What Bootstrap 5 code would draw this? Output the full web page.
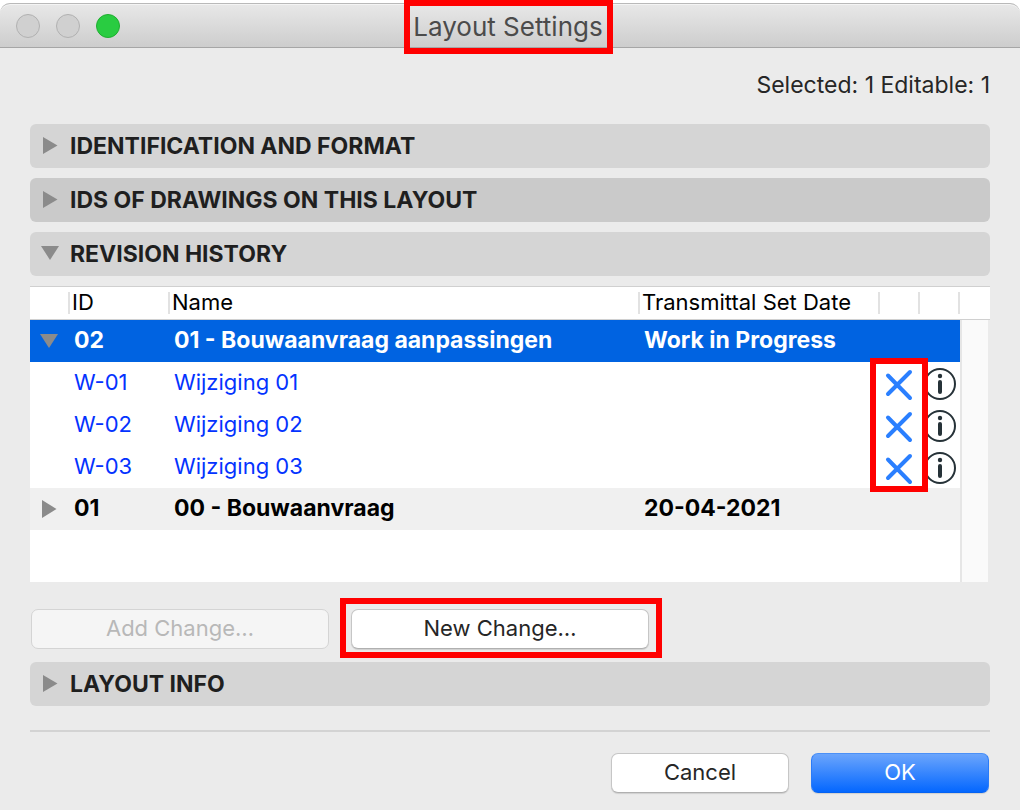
<!DOCTYPE html>
<html lang="en">
<head>
<meta charset="utf-8">
<meta name="viewport" content="width=device-width, initial-scale=1">
<title>Layout Settings</title>
<link rel="stylesheet" href="https://cdn.jsdelivr.net/npm/bootstrap@5.3.0/dist/css/bootstrap.min.css">
<style>
  body { font-family: Inter, "Liberation Sans", sans-serif; font-size: 22px; line-height: 28px; color: #262626; background: #fff; }
  .dialog-window { min-height: calc(100vh - 3px); margin-top: 3px; background: #ebebeb; border-radius: 10px 10px 0 0; }
  .title-bar { height: 45px; padding-left: 16px; border-top: 1px solid #b9b9b9; border-bottom: 1px solid #a6a6a6; border-radius: 10px 10px 0 0; background: linear-gradient(#e8e8e8, #cdcdcd); box-shadow: inset 0 1px #f4f4f4; }
  .light { width: 24px; height: 24px; border: 1px solid #b1b1b1; border-radius: 50%; background: #d0d0d0; }
  .light-zoom { background: #29cc41; border-color: #1fae30; }
  .title-wrap { padding-top: 2px; }
  .title-text { font-size: 26px; line-height: 32px; color: #4b4b4b; }
  .callout-box { position: absolute; border: 6px solid #f00; pointer-events: none; }
  .title-callout { inset: -11px -10px -11px -9px; }
  .dialog-body { padding: 23px 30px 16px; }
  .selection-info { font-size: 23px; margin: 0 0 25px; }
  .sections { row-gap: 10px; }
  .section-bar { height: 44px; padding: 0 11px; gap: 11px; border: 0; border-radius: 6px; background: #d5d5d5; color: #1f1f1f; font-size: 23px; font-weight: 700; text-align: left; }
  .section-bar.hovered { background: #cacaca; }
  .last-bar { margin-top: 13px; }
  .tri { width: 18px; height: 18px; fill: #8b8b8b; display: block; flex: none; }
  .revisions { table-layout: fixed; width: 100%; border-collapse: separate; border-spacing: 0; background: #fff; color: #000; }
  .revisions th, .revisions td { padding: 0 4px 2px; white-space: nowrap; }
  .revisions thead th { height: 34px; padding: 0 2px 2px; font-weight: 400; border-top: 1px solid #d0d0d0; border-bottom: 1px solid #d0d0d0; background: linear-gradient(#e2e2e2, #e2e2e2) no-repeat right center / 2px 22px; }
  .revisions thead th:last-child { background: none; }
  .revisions tbody tr { height: 42px; }
  .revisions .set-row { font-size: 23px; font-weight: 700; background: #f0f0f0; }
  .revisions .picked { background: #0063e1; color: #fff; }
  .revisions .change-row { color: #0433ff; }
  .revisions .tail-row { height: 52px; }
  .revisions .tri-cell { padding: 0 10px; }
  .revisions .icon-cell { padding: 0; }
  .revisions .track { background: #fafafa; border-left: 2px solid #e6e6e6; border-right: 2px solid #ebebeb; }
  .col-arrow, .col-icon { width: 40px; }
  .col-id { width: 100px; }
  .col-date { width: 240px; }
  .col-track { width: 30px; }
  .delete-callout { top: 72px; right: 62px; width: 58px; height: 134px; }
  .icon-btn { display: block; padding: 0; border: 0; background: none; }
  .icon-btn svg { display: block; }
  .buttons-row { gap: 22px; padding: 27px 1px 0; }
  .action-row { gap: 22px; padding: 21px 1px 0; }
  .mac-btn { height: 40px; padding: 0 0 2px; border: 1px solid #c6c6c6; border-bottom-color: #b0b0b0; border-radius: 7px; background: #fff; color: #262626; font-size: 22px; line-height: 28px; box-shadow: 0 1px 1px rgba(0,0,0,.12); }
  .mac-btn:disabled { background: #f5f5f5; color: #b8b8b8; border-color: #d4d4d4; opacity: 1; box-shadow: none; }
  .mac-btn.primary { background: linear-gradient(#6ba5fc, #0467ff); color: #fff; border-color: #4b90f7 #2a7bf8 #0562f2; }
  .wide { width: 298px; }
  .medium { width: 178px; }
  .new-callout { inset: -11px -13px -9px -11px; }
  .rule { height: 2px; background: #d3d3d3; }
</style>
</head>
<body>
<div class="dialog-window">
  <header class="title-bar position-relative d-flex align-items-center">
    <div class="d-flex gap-3">
      <span class="light"></span><span class="light"></span><span class="light light-zoom"></span>
    </div>
    <div class="title-wrap position-absolute start-0 end-0 d-flex justify-content-center pe-1">
      <h1 class="title-text position-relative fw-normal m-0">Layout Settings<span class="callout-box title-callout"></span></h1>
    </div>
  </header>
  <main class="dialog-body">
    <p class="selection-info text-end">Selected: 1 Editable: 1</p>
    <div class="sections d-grid">
      <button type="button" class="section-bar d-flex align-items-center" aria-expanded="false"><svg class="tri" viewBox="0 0 18 18"><path d="M2 0 16.500 8.500 2 17z"/></svg>IDENTIFICATION AND FORMAT</button>
      <button type="button" class="section-bar hovered d-flex align-items-center" aria-expanded="false"><svg class="tri" viewBox="0 0 18 18"><path d="M2 0 16.500 8.500 2 17z"/></svg>IDS OF DRAWINGS ON THIS LAYOUT</button>
      <button type="button" class="section-bar d-flex align-items-center" aria-expanded="true"><svg class="tri" viewBox="0 0 18 18"><path d="M0 1H18L9 15z"/></svg>REVISION HISTORY</button>
      <div class="position-relative">
        <table class="revisions">
          <colgroup><col class="col-arrow"><col class="col-id"><col><col class="col-date"><col class="col-icon"><col class="col-icon"><col class="col-track"></colgroup>
          <thead>
            <tr><th></th><th>ID</th><th>Name</th><th>Transmittal Set Date</th><th></th><th></th><th></th></tr>
          </thead>
          <tbody>
            <tr class="set-row picked"><td class="tri-cell"><svg class="tri" viewBox="0 0 18 18"><path d="M0 2H18L9 16z"/></svg></td><td>02</td><td>01 - Bouwaanvraag aanpassingen</td><td>Work in Progress</td><td></td><td></td><td class="track" rowspan="6"></td></tr>
            <tr class="change-row"><td></td><td>W-01</td><td>Wijziging 01</td><td></td>
              <td class="icon-cell"><button type="button" class="icon-btn" aria-label="Delete W-01"><svg width="40" height="42"><use href="#i-x"/></svg></button></td>
              <td class="icon-cell"><button type="button" class="icon-btn" aria-label="Info W-01"><svg width="40" height="42"><use href="#i-info"/></svg></button></td></tr>
            <tr class="change-row"><td></td><td>W-02</td><td>Wijziging 02</td><td></td>
              <td class="icon-cell"><button type="button" class="icon-btn" aria-label="Delete W-02"><svg width="40" height="42"><use href="#i-x"/></svg></button></td>
              <td class="icon-cell"><button type="button" class="icon-btn" aria-label="Info W-02"><svg width="40" height="42"><use href="#i-info"/></svg></button></td></tr>
            <tr class="change-row"><td></td><td>W-03</td><td>Wijziging 03</td><td></td>
              <td class="icon-cell"><button type="button" class="icon-btn" aria-label="Delete W-03"><svg width="40" height="42"><use href="#i-x"/></svg></button></td>
              <td class="icon-cell"><button type="button" class="icon-btn" aria-label="Info W-03"><svg width="40" height="42"><use href="#i-info"/></svg></button></td></tr>
            <tr class="set-row"><td class="tri-cell"><svg class="tri" viewBox="0 0 18 18"><path d="M2 0 16.500 9 2 18z"/></svg></td><td>01</td><td>00 - Bouwaanvraag</td><td>20-04-2021</td><td></td><td></td></tr>
            <tr class="tail-row"><td colspan="6"></td></tr>
          </tbody>
        </table>
        <span class="callout-box delete-callout"></span>
      </div>
    </div>
    <div class="buttons-row d-flex">
      <button type="button" class="btn mac-btn wide" disabled>Add Change…</button>
      <div class="position-relative d-flex">
        <button type="button" class="btn mac-btn wide">New Change…</button>
        <span class="callout-box new-callout"></span>
      </div>
    </div>
    <button type="button" class="section-bar last-bar w-100 d-flex align-items-center" aria-expanded="false"><svg class="tri" viewBox="0 0 18 18"><path d="M2 0 16.500 8.500 2 17z"/></svg>LAYOUT INFO</button>
    <div class="rule mt-4"></div>
    <div class="action-row d-flex justify-content-end">
      <button type="button" class="btn mac-btn medium">Cancel</button>
      <button type="button" class="btn mac-btn medium primary">OK</button>
    </div>
  </main>
</div>
<svg class="d-none">
  <symbol id="i-x" viewBox="0 0 40 42"><path d="M8 13.500 30 36M30 10 8 32" fill="none" stroke="#2a7fff" stroke-width="4" stroke-linecap="round"/></symbol>
  <symbol id="i-info" viewBox="0 0 40 42"><circle cx="20" cy="22" r="15" fill="none" stroke="#263238" stroke-width="2"/><circle cx="20" cy="14" r="2.200" fill="#263238"/><path d="M20 20V30" stroke="#263238" stroke-width="4" stroke-linecap="round"/></symbol>
</svg>
<script src="https://cdn.jsdelivr.net/npm/bootstrap@5.3.0/dist/js/bootstrap.bundle.min.js"></script>
</body>
</html>
